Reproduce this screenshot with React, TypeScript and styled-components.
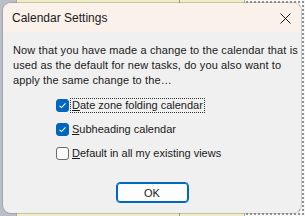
import styled, { createGlobalStyle } from 'styled-components'

const Global = createGlobalStyle`
  html, body { margin: 0; padding: 0; }
  body {
    width: 305px;
    height: 216px;
    overflow: hidden;
    font-family: "Liberation Sans", Arial, sans-serif;
  }
`

const Backdrop = styled.div`
  position: relative;
  width: 305px;
  height: 216px;
  display: flex;
  background: #f3f3f3;
`

const SideStrip = styled.div`
  width: 16px;
  background: #b9bec7;
`

const Sheet = styled.div`
  flex: 1;
  background: #eeedc4;
  border-left: 1px solid #a9adb3;
  display: flex;
  justify-content: flex-end;
`

const SheetLine = styled.div`
  width: 64px;
  border-left: 1px solid #9a9a9a;
`

const Dotted = styled.div`
  width: 60px;
  background: #f7f7f7;
  border-left: 1px solid #b0b0b0;
  background-image: radial-gradient(#8a8a8a 0.7px, transparent 0.8px);
  background-size: 4px 4px;
`

const Dialog = styled.div`
  position: absolute;
  left: 3px;
  top: 3px;
  width: 298px;
  height: 210px;
  border-radius: 8px;
  background: #f0f0f0;
  box-shadow: 0 0 0 1px rgba(120, 120, 120, 0.35);
  overflow: hidden;
  display: flex;
  flex-direction: column;
`

const TitleBar = styled.div`
  height: 29px;
  background: #faf1eb;
  display: flex;
  align-items: center;
  justify-content: space-between;
  padding: 1px 10px 0 9px;
  box-sizing: border-box;
  font-size: 12px;
  color: #1a1a1a;
`

const CloseButton = styled.div`
  width: 12px;
  height: 12px;
  display: flex;
  align-items: center;
  justify-content: center;
`

const Body = styled.div`
  padding: 11px 10px 0 10px;
  display: flex;
  flex-direction: column;
`

const Message = styled.p`
  margin: 0;
  font-size: 11px;
  letter-spacing: 0.12px;
  line-height: 15px;
  color: #1a1a1a;
  white-space: nowrap;
`

const Options = styled.div`
  margin-top: 11px;
  padding-left: 43px;
  display: flex;
  flex-direction: column;
  gap: 11px;
`

const Option = styled.label`
  display: flex;
  align-items: center;
  gap: 2px;
  font-size: 11px;
  color: #1a1a1a;
  height: 13px;
`

const Box = styled.span<{ $checked: boolean }>`
  width: 13px;
  height: 13px;
  box-sizing: border-box;
  border-radius: 3px;
  display: flex;
  align-items: center;
  justify-content: center;
  background: ${p => (p.$checked ? '#0067c0' : '#fbfbfb')};
  border: 1px solid ${p => (p.$checked ? '#0067c0' : '#6b6b6b')};
`

const Label = styled.span<{ $focused?: boolean }>`
  padding: 0 1px;
  line-height: 13px;
  outline: ${p => (p.$focused ? '1px dotted #333' : 'none')};
  outline-offset: 0;
`

const Footer = styled.div`
  margin-top: 22px;
  display: flex;
  justify-content: center;
`

const OkButton = styled.button`
  width: 73px;
  height: 21px;
  border-radius: 4px;
  border: 1px solid #0067c0;
  box-shadow: inset 0 0 0 1px #0067c0;
  background: #fdfdfd;
  font-family: inherit;
  font-size: 11px;
  color: #1a1a1a;
  padding: 0;
`

const Check = () => (
  <svg width="9" height="9" viewBox="0 0 9 9">
    <path d="M1.5 4.8 L3.5 6.6 L7.5 2.4" fill="none" stroke="#fff" strokeWidth="1.1" />
  </svg>
)

const options = [
  { key: 'D', rest: 'ate zone folding calendar', checked: true, focused: true },
  { key: 'S', rest: 'ubheading calendar', checked: true },
  { key: 'D', rest: 'efault in all my existing views', checked: false },
]

export default function App() {
  return (
    <>
      <Global />
      <Backdrop>
        <SideStrip />
        <Sheet>
          <SheetLine />
        </Sheet>
        <Dotted />
        <Dialog>
          <TitleBar>
            <span>Calendar Settings</span>
            <CloseButton>
              <svg width="11" height="11" viewBox="0 0 11 11">
                <path d="M0.5 0.5 L10.5 10.5 M10.5 0.5 L0.5 10.5" stroke="#1a1a1a" strokeWidth="1" />
              </svg>
            </CloseButton>
          </TitleBar>
          <Body>
            <Message>
              Now that you have made a change to the calendar that is
              <br />
              used as the default for new tasks, do you also want to
              <br />
              apply the same change to the…
            </Message>
            <Options>
              {options.map((o, i) => (
                <Option key={i}>
                  <Box $checked={o.checked}>{o.checked && <Check />}</Box>
                  <Label $focused={o.focused}>
                    <u>{o.key}</u>
                    {o.rest}
                  </Label>
                </Option>
              ))}
            </Options>
            <Footer>
              <OkButton>OK</OkButton>
            </Footer>
          </Body>
        </Dialog>
      </Backdrop>
    </>
  )
}
